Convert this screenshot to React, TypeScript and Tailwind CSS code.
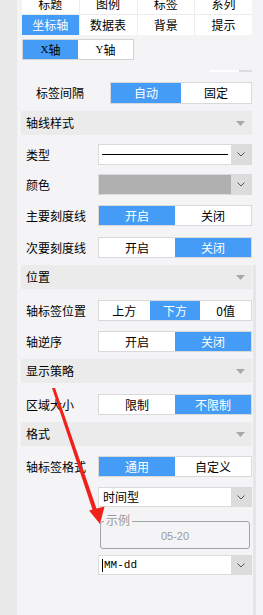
import React from "react";

const BLUE = "bg-[#449cf6]";

function Seg({ items, active, className = "" }: { items: string[]; active: number; className?: string }) {
  return (
    <div className={`flex h-[21px] border border-[#d9d9d9] bg-white ${className}`}>
      {items.map((t, i) => (
        <div
          key={t}
          className={`flex flex-1 items-center justify-center text-[12px] leading-none ${
            i === active ? `${BLUE} text-white` : "bg-white text-black"
          }`}
        >
          {t}
        </div>
      ))}
    </div>
  );
}

function Chevron() {
  return (
    <div className="flex w-[20px] items-center justify-center bg-[#dcdcdc]">
      <svg width="8" height="5" viewBox="0 0 8 5">
        <path d="M0.5 0.5 L4 4 L7.5 0.5" fill="none" stroke="#555" strokeWidth="1" />
      </svg>
    </div>
  );
}

function Row({ label, children, mt }: { label: string; children: React.ReactNode; mt: string }) {
  return (
    <div className={`flex items-center ${mt}`}>
      <div className="w-[77px] pl-[5px] text-[12px] leading-none text-black">{label}</div>
      <div className="w-[154px]">{children}</div>
    </div>
  );
}

function Header({ title, mt }: { title: string; mt: string }) {
  return (
    <div className={`flex h-[24px] items-center justify-between bg-[#ebebeb] pl-[5px] pr-[7px] ${mt}`}>
      <span className="text-[12px] leading-none text-black">{title}</span>
      <svg width="9" height="5" viewBox="0 0 9 5">
        <path d="M0 0 L9 0 L4.5 5 Z" fill="#a8a8a8" />
      </svg>
    </div>
  );
}

export default function App() {
  return (
    <div
      className="relative flex h-[615px] w-[263px] overflow-hidden bg-[#f4f4f6]"
      style={{ fontFamily: '"Noto Sans CJK SC", "Liberation Sans", sans-serif' }}
    >
      <div className="w-[17px] shrink-0 bg-[#e8e8e8]" />
      <div className="flex w-[236px] shrink-0 flex-col pl-[4px] pr-[1px]">
        {/* tabs */}
        <div className="-mt-[6px] ml-[1px] grid grid-cols-4 gap-[1px] bg-[#ececec]">
          {["标题", "图例", "标签", "系列"].map((t) => (
            <div key={t} className="flex h-[20px] items-center justify-center bg-white text-[12px] leading-none">
              {t}
            </div>
          ))}
          {["坐标轴", "数据表", "背景", "提示"].map((t, i) => (
            <div
              key={t}
              className={`flex h-[20px] items-center justify-center text-[12px] leading-none ${
                i === 0 ? `${BLUE} text-white` : "bg-white text-black"
              }`}
            >
              {t}
            </div>
          ))}
        </div>
        {/* X / Y axis */}
        <div className="ml-[1px] mt-[4px] flex h-[21px] w-[112px] border border-[#d4d4d4]">
          <div className={`flex flex-1 items-center justify-center ${BLUE} text-[12px] leading-none text-black`}>
            <span style={{ fontFamily: '"Liberation Serif", serif' }} className="text-[11px]">X</span>轴
          </div>
          <div className="flex flex-1 items-center justify-center bg-white text-[12px] leading-none text-black">
            <span style={{ fontFamily: '"Liberation Serif", serif' }} className="text-[11px]">Y</span>轴
          </div>
        </div>
        {/* slider fragment */}
        <div className="ml-[189px] mt-[10px] flex h-[2px] w-[42px]">
          <div className="w-[29px] bg-white" />
          <div className="flex-1 bg-[#dcdcdc]" />
        </div>
        {/* 标签间隔 */}
        <div className="mt-[10px] flex h-[22px] items-center">
          <div className="w-[89px] pl-[15px] text-[12px] leading-none">标签间隔</div>
          <Seg items={["自动", "固定"]} active={0} className="h-[22px] w-[142px]" />
        </div>

        <Header title="轴线样式" mt="mt-[7px]" />
        <Row label="类型" mt="mt-[9px]">
          <div className="flex h-[21px] border border-[#dadada] bg-white">
            <div className="flex flex-1 items-center px-[3px]">
              <div className="h-[1px] w-full bg-black" />
            </div>
            <Chevron />
          </div>
        </Row>
        <Row label="颜色" mt="mt-[9px]">
          <div className="flex h-[21px] border border-[#dadada] bg-white">
            <div className="flex-1 bg-[#b0b0b0]" />
            <Chevron />
          </div>
        </Row>
        <Row label="主要刻度线" mt="mt-[10px]">
          <Seg items={["开启", "关闭"]} active={0} />
        </Row>
        <Row label="次要刻度线" mt="mt-[11px]">
          <Seg items={["开启", "关闭"]} active={1} />
        </Row>

        <Header title="位置" mt="mt-[7px]" />
        <Row label="轴标签位置" mt="mt-[11px]">
          <Seg items={["上方", "下方", "0值"]} active={1} />
        </Row>
        <Row label="轴逆序" mt="mt-[10px]">
          <Seg items={["开启", "关闭"]} active={1} />
        </Row>

        <Header title="显示策略" mt="mt-[7px]" />
        <Row label="区域大小" mt="mt-[11px]">
          <Seg items={["限制", "不限制"]} active={1} />
        </Row>

        <Header title="格式" mt="mt-[7px]" />
        <Row label="轴标签格式" mt="mt-[10px]">
          <Seg items={["通用", "自定义"]} active={0} />
        </Row>
        <div className="ml-[77px] mt-[10px] flex h-[20px] w-[154px] border border-[#dadada] bg-white">
          <div className="flex flex-1 items-center pl-[4px] text-[12px] leading-none">时间型</div>
          <Chevron />
        </div>
        {/* fieldset */}
        <div className="relative ml-[79px] mt-[14px] flex h-[28px] w-[150px] items-center justify-center rounded-[3px] border border-[#a3a3a3]">
          <span className="absolute -top-[8px] left-[3px] bg-[#f4f4f6] px-[2px] text-[12px] leading-none text-[#9a9a9a]">
            示例
          </span>
          <span className="mt-[2px] text-[11px] leading-none text-[#9a9a9a]" style={{ fontFamily: '"Liberation Sans", sans-serif' }}>
            05-20
          </span>
        </div>
        <div className="ml-[77px] mt-[6px] flex h-[20px] w-[154px] border border-[#dadada] bg-white">
          <div className="flex flex-1 items-center pl-[3px] text-[11px] leading-none" style={{ fontFamily: '"Liberation Mono", monospace' }}>
            <span className="mr-[1px] inline-block h-[13px] w-[1px] bg-black" />
            MM-dd
          </div>
          <Chevron />
        </div>
      </div>
      {/* scrollbar column */}
      <div className="flex w-[10px] shrink-0 flex-col">
        <div className="h-[265px]" />
        <div className="w-[3px] flex-1 bg-[#e6e6e6]" />
      </div>

      {/* red annotation arrow */}
      <svg className="pointer-events-none absolute left-0 top-0" width="263" height="615" viewBox="0 0 263 615">
        <path d="M52 388 L55 388 L97 510 L93 511 Z" fill="#f0201a" />
        <path d="M100 524 L89 510.5 L104.5 506.5 Z" fill="#f0201a" />
      </svg>
    </div>
  );
}
